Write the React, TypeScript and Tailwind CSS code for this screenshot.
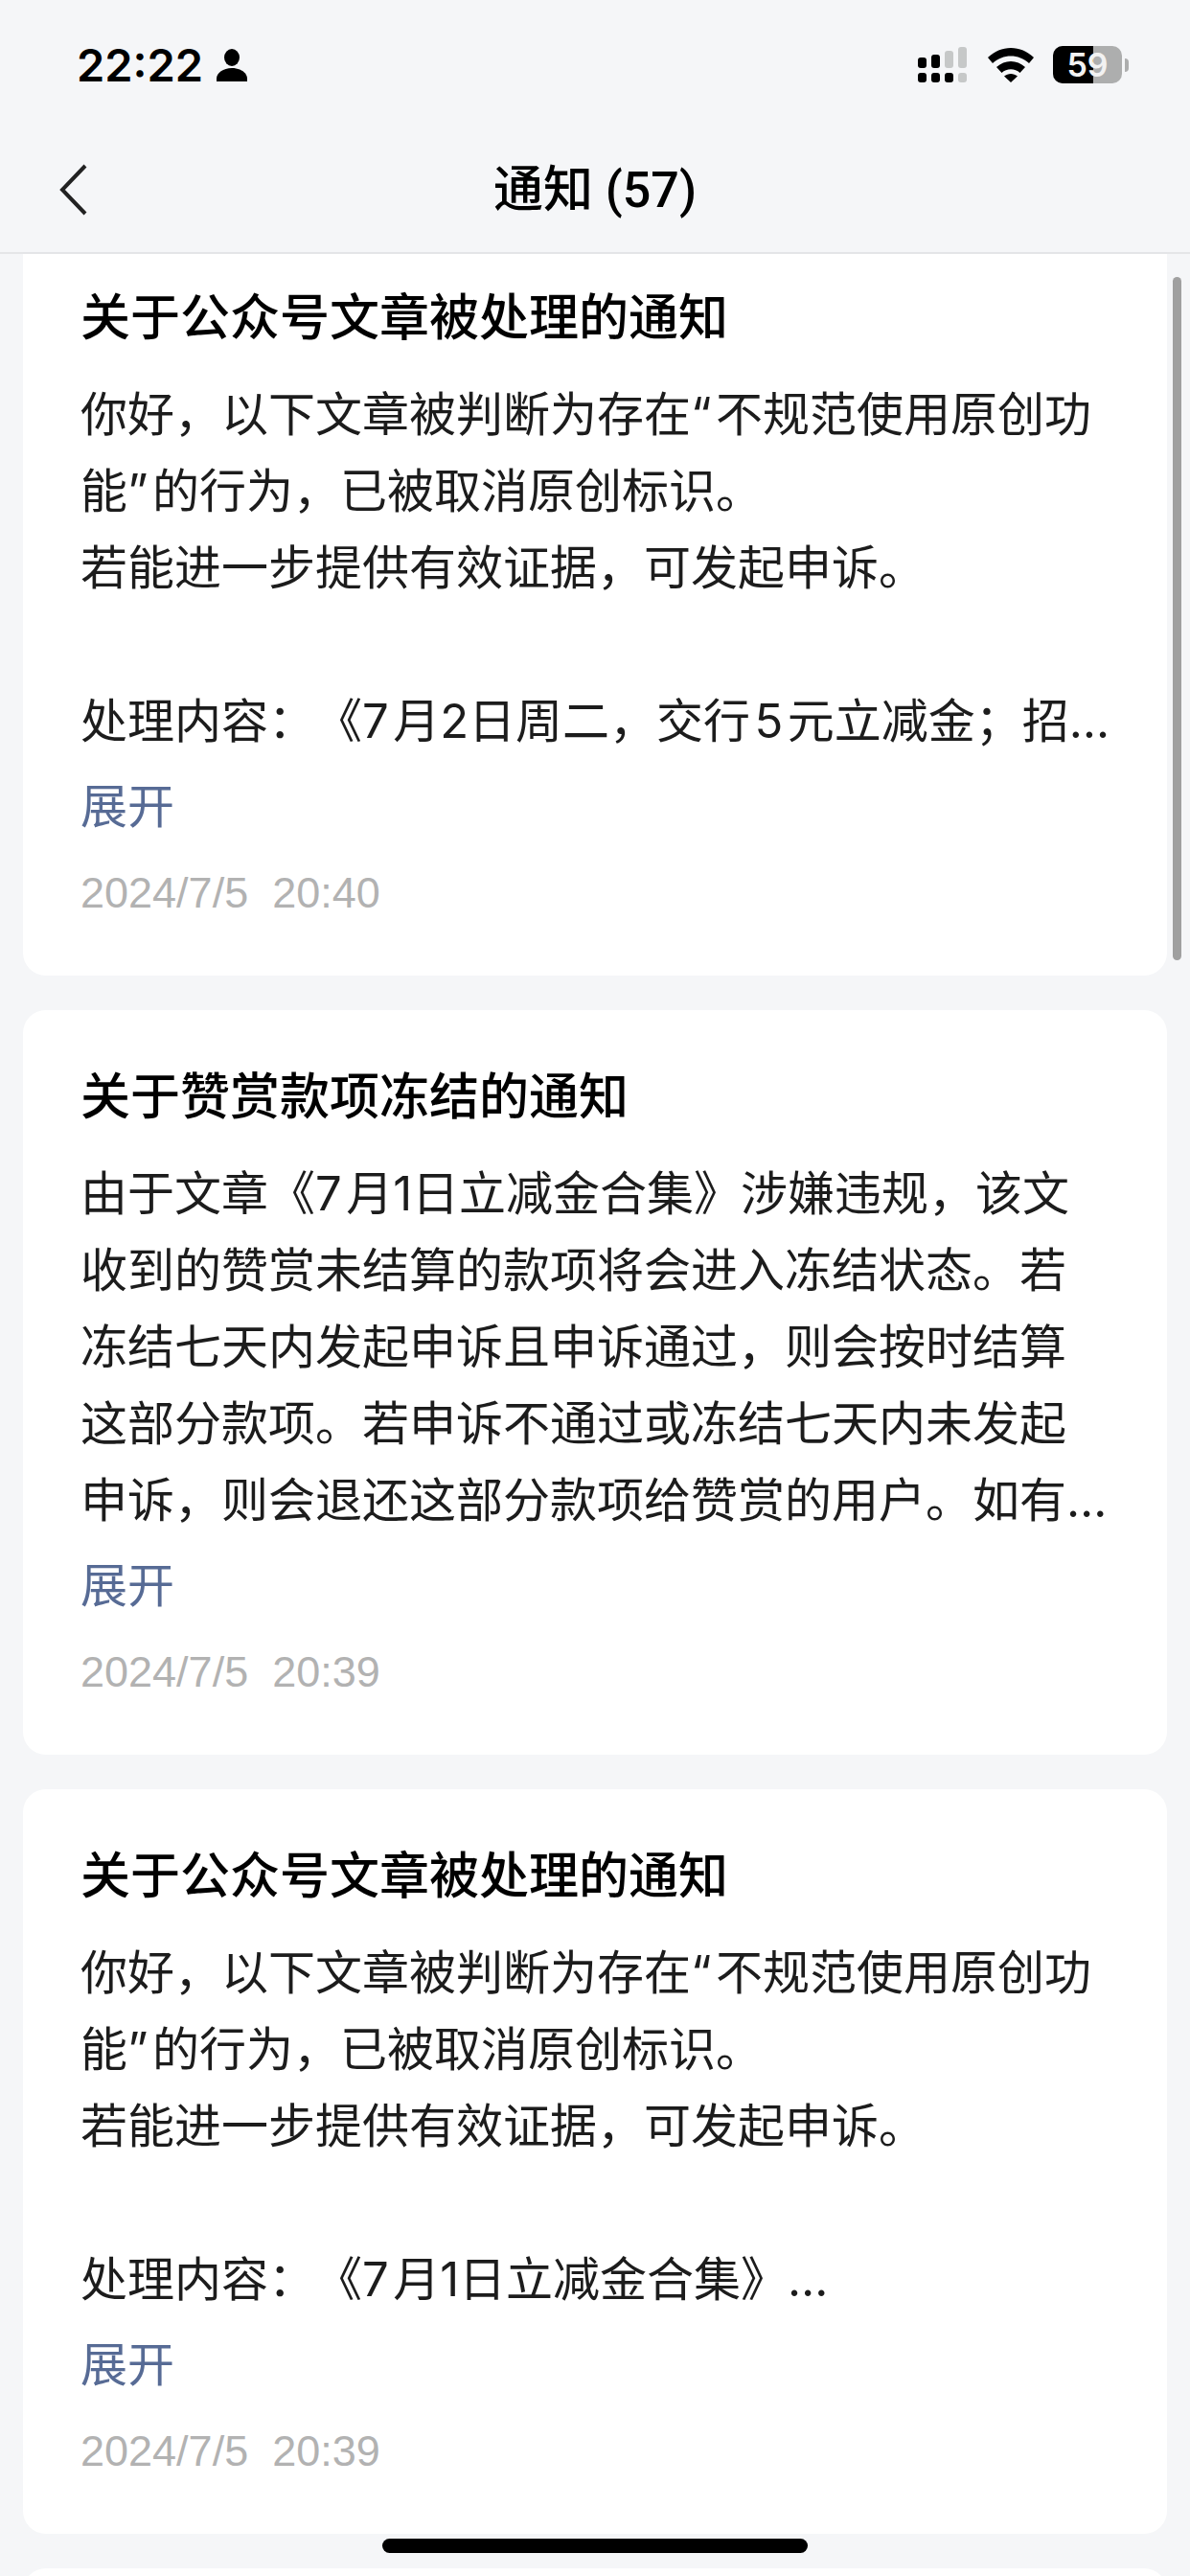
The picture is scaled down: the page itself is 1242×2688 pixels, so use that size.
const bodyFont = "font-['Inter','Noto_Sans_CJK_SC',sans-serif]";

interface Notice {
  title: string;
  lines: string[];
  time: string;
}

const originalLines = (work: string) => [
  '你好，以下文章被判断为存在“\u200a不规范使用原创功',
  '能”\u200a的行为，已被取消原创标识。',
  '若能进一步提供有效证据，可发起申诉。',
  '\u00a0',
  work,
];

const notices: Notice[] = [
  {
    title: '关于公众号文章被处理的通知',
    lines: originalLines('处理内容：《7\u200a月2日周二，交行\u200a5\u200a元立减金；招…'),
    time: '2024/7/5\u00a0\u00a020:40',
  },
  {
    title: '关于赞赏款项冻结的通知',
    lines: [
      '由于文章《7\u200a月1日立减金合集》涉嫌违规，该文',
      '收到的赞赏未结算的款项将会进入冻结状态。若',
      '冻结七天内发起申诉且申诉通过，则会按时结算',
      '这部分款项。若申诉不通过或冻结七天内未发起',
      '申诉，则会退还这部分款项给赞赏的用户。如有…',
    ],
    time: '2024/7/5\u00a0\u00a020:39',
  },
  {
    title: '关于公众号文章被处理的通知',
    lines: originalLines('处理内容：《7\u200a月1日立减金合集》…'),
    time: '2024/7/5\u00a0\u00a020:39',
  },
];

function StatusBar() {
  return (
    <div className="flex h-[144px] items-start justify-between pl-[80px] pr-[64px] pt-[48px]">
      <div className="flex items-center gap-[14px]">
        <span className="font-['Inter',sans-serif] text-[47px] leading-[40px] font-semibold text-black">22:22</span>
        <svg width="32" height="34" viewBox="0 0 32 34" fill="#000">
          <ellipse cx="16" cy="9" rx="8" ry="9" />
          <path d="M0 34v-3C0 25 7 20 16 20s16 5 16 11v3z" />
        </svg>
      </div>
      <div className="flex items-center">
        <svg width="52" height="38" viewBox="0 0 52 38">
          <g fill="#000">
            <rect x="0" y="11" width="9" height="11" rx="3" />
            <rect x="14" y="8" width="9" height="14" rx="3" />
            <rect x="0" y="27" width="9" height="10" rx="3" />
            <rect x="14" y="27" width="9" height="10" rx="3" />
            <rect x="28" y="27" width="9" height="10" rx="3" />
          </g>
          <g fill="#c6c8c8">
            <rect x="28" y="4" width="9" height="18" rx="3" />
            <rect x="42" y="0" width="9" height="22" rx="3" />
            <rect x="42" y="27" width="9" height="10" rx="3" />
          </g>
        </svg>
        <svg className="ml-[21px]" width="48" height="36" viewBox="0 0 48 36" fill="#000">
          <path d="M24 0c9 0 17 3.500 24 10l-5 6c-5.500-5-12-7.500-19-7.500S10.500 11 5 16l-5-6C7 3.500 15 0 24 0z" />
          <path d="M24 14c5.500 0 10.500 2 15 6l-5.500 6c-2.700-2.400-6-3.700-9.500-3.700s-6.800 1.300-9.500 3.700L9 20c4.500-4 9.500-6 15-6z" />
          <path d="M24 27c2.500 0 4.800 1 7 2.500L24 36l-7-6.500C19.200 28 21.500 27 24 27z" />
        </svg>
        <div className="relative ml-[20px] flex h-[39px] w-[72px] items-center justify-center overflow-hidden rounded-[10px] bg-[#adaeae]">
          <div className="absolute inset-y-0 left-0 w-[42px] bg-black" />
          <span className="relative font-['Inter',sans-serif] text-[34px] leading-none font-semibold text-[#f2f2f2]">59</span>
        </div>
        <div className="ml-[3px] h-[14px] w-[4px] rounded-r-full bg-[#adaeae]" />
      </div>
    </div>
  );
}

function NoticeCard({ notice }: { notice: Notice }) {
  return (
    <div className="h-[777px] rounded-[24px] bg-white px-[60px] pt-[61px]">
      <h2 className={`${bodyFont} text-[52px] leading-[60px] font-medium text-black`}>{notice.title}</h2>
      <div className={`${bodyFont} mt-[31px] text-[49px] leading-[80px] text-[#1c1c1c] [text-spacing-trim:space-all]`}>
        {notice.lines.map((line, i) => (
          <div key={i} className="whitespace-nowrap">
            {line}
          </div>
        ))}
      </div>
      <div className={`${bodyFont} mt-[9px] text-[49px] leading-[80px] text-[#576b95]`}>展开</div>
      <div className="mt-[10px] font-['Liberation_Sans',sans-serif] text-[45px] leading-[80px] text-[#b2b2b2]">{notice.time}</div>
    </div>
  );
}

export default function App() {
  return (
    <div className="relative flex h-[2688px] w-[1242px] flex-col overflow-hidden bg-[#f5f6f8]">
      <header className="relative z-10 h-[265px] shrink-0 border-b-2 border-[#e4e5e7] bg-[#f5f6f8]">
        <StatusBar />
        <div className="relative flex h-[110px] items-center justify-center">
          <svg className="absolute left-[60px] top-[27px]" width="32" height="54" viewBox="0 0 32 54" fill="none" stroke="#222" strokeWidth="4">
            <path d="M29 2 5 27l24 25" />
          </svg>
          <h1 className="font-['Roboto','Noto_Sans_CJK_SC',sans-serif] text-[52px] leading-[60px] font-medium text-black">通知 (57)</h1>
        </div>
      </header>

      <main className="-mt-[24px] flex flex-col gap-[36px] px-[24px]">
        {notices.map((notice, i) => (
          <NoticeCard key={i} notice={notice} />
        ))}
        <div className="h-[777px] shrink-0 rounded-[24px] bg-white" />
      </main>

      <div className="absolute right-[9px] top-[289px] z-20 h-[713px] w-[9px] rounded-full bg-[#a0a0a0]" />
      <div className="absolute bottom-[24px] left-[399px] z-20 h-[15px] w-[444px] rounded-full bg-black" />
    </div>
  );
}
